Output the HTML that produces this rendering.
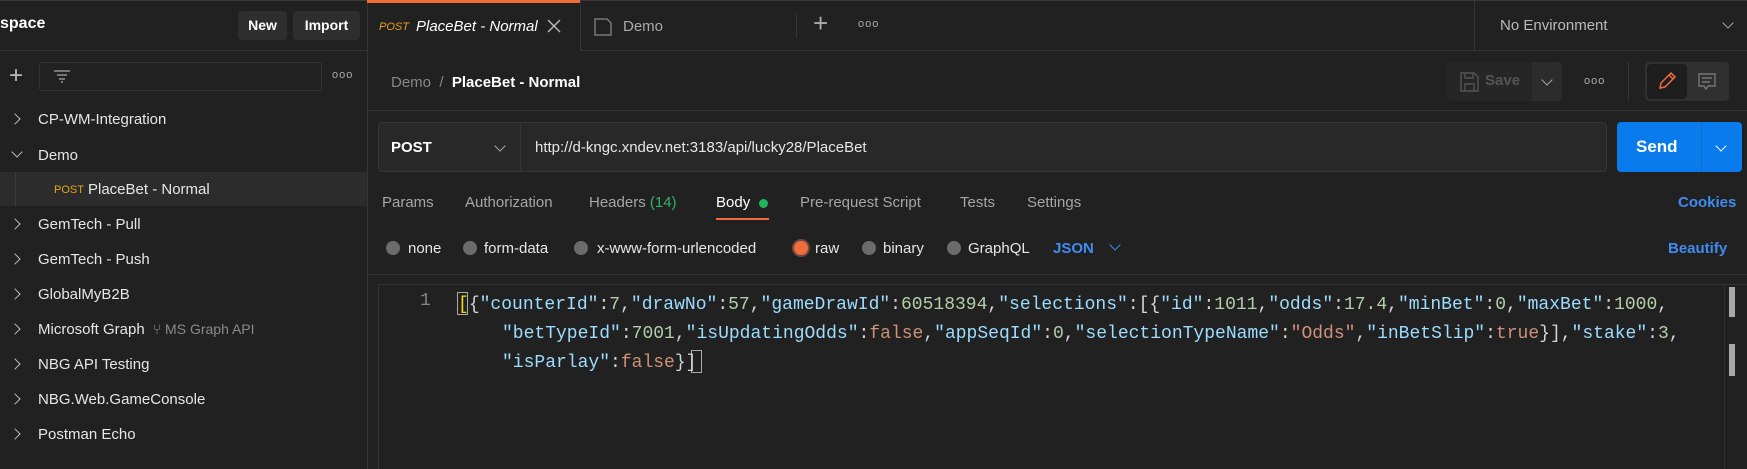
<!DOCTYPE html>
<html><head><meta charset="utf-8"><style>
*{margin:0;padding:0;box-sizing:border-box}
body{width:1747px;height:469px;background:#212121;font-family:"Liberation Sans",sans-serif;color:#e6e6e6;position:relative;overflow:hidden;font-size:15px}
.a{position:absolute;white-space:nowrap}
.hl{position:absolute;height:1px;background:#353535}
.vl{position:absolute;width:1px;background:#353535}
.chev{position:absolute;width:8px;height:8px;border-right:1.5px solid #bbb;border-bottom:1.5px solid #bbb}
.r{transform:rotate(-45deg)}
.d{transform:rotate(45deg)}
.radio{position:absolute;width:14px;height:14px;border-radius:50%;background:#6b6b6b}
.code{font-family:"Liberation Mono",monospace;font-size:18px;color:#d4d4d4}
.k{color:#9cdcfe}.n{color:#b5cea8}.s{color:#ce9178}
.dots{position:absolute;font-size:11px;color:#aaa;letter-spacing:1px}
</style></head><body>
<div class="hl" style="left:0;top:0;width:1747px;background:#3a3a3a"></div>
<!-- sidebar -->
<div class="a" style="left:0;top:15px;font-weight:bold;font-size:16px;color:#fff">space</div>
<div class="a" style="left:238px;top:11px;width:49px;height:29px;background:#2e2e2e;border-radius:4px;color:#fff;font-weight:bold;font-size:14px;text-align:center;line-height:29px">New</div>
<div class="a" style="left:293px;top:11px;width:67px;height:29px;background:#2e2e2e;border-radius:4px;color:#fff;font-weight:bold;font-size:14px;text-align:center;line-height:29px">Import</div>
<div class="hl" style="left:0;top:50px;width:367px"></div>
<div class="a" style="left:9px;top:62px;font-size:24px;color:#bbb;font-weight:300">+</div>
<div class="a" style="left:39px;top:62px;width:283px;height:29px;border:1px solid #333;border-radius:3px"></div>
<svg class="a" style="left:52px;top:68px" width="20" height="16"><path d="M2 3h16M5 7h10M7 11h6M9 14h2" stroke="#aaa" stroke-width="1.3"/></svg>
<div class="dots" style="left:332px;top:69px">ooo</div>
<div class="a" style="left:0;top:172px;width:367px;height:34px;background:#2c2c2c"></div>
<div class="vl" style="left:15px;top:172px;height:34px;background:#3a3a3a"></div>
<div class="chev r" style="left:11px;top:115px"></div>
<div class="a" style="left:38px;top:111px">CP-WM-Integration</div>
<div class="chev d" style="left:13px;top:148px"></div>
<div class="a" style="left:38px;top:147px">Demo</div>
<div class="a" style="left:54px;top:184px;font-size:11px;color:#e8a317">POST</div>
<div class="a" style="left:88px;top:181px">PlaceBet - Normal</div>
<div class="chev r" style="left:11px;top:220px"></div><div class="a" style="left:38px;top:216px">GemTech - Pull</div>
<div class="chev r" style="left:11px;top:255px"></div><div class="a" style="left:38px;top:251px">GemTech - Push</div>
<div class="chev r" style="left:11px;top:290px"></div><div class="a" style="left:38px;top:286px">GlobalMyB2B</div>
<div class="chev r" style="left:11px;top:325px"></div><div class="a" style="left:38px;top:321px">Microsoft Graph <span style="color:#8a8a8a;font-size:14px">&nbsp;⑂ MS Graph API</span></div>
<div class="chev r" style="left:11px;top:360px"></div><div class="a" style="left:38px;top:356px">NBG API Testing</div>
<div class="chev r" style="left:11px;top:395px"></div><div class="a" style="left:38px;top:391px">NBG.Web.GameConsole</div>
<div class="chev r" style="left:11px;top:430px"></div><div class="a" style="left:38px;top:426px">Postman Echo</div>
<div class="vl" style="left:367px;top:0;height:469px"></div>
<!-- tabs -->
<div class="a" style="left:367px;top:0;width:213px;height:3px;background:#f26b3a"></div>
<div class="a" style="left:379px;top:21px;font-size:11px;color:#e8a317;font-style:italic">POST</div>
<div class="a" style="left:416px;top:18px;font-style:italic;color:#fff;font-size:15px">PlaceBet - Normal</div>
<svg class="a" style="left:547px;top:19px" width="14" height="14"><path d="M1 1L13 13M13 1L1 13" stroke="#bbb" stroke-width="1.4"/></svg>
<div class="vl" style="left:580px;top:0;height:50px"></div>
<div class="hl" style="left:580px;top:50px;width:1167px"></div>
<svg class="a" style="left:593px;top:17px" width="20" height="20"><path d="M2 2h12l4 4v12H2z" fill="none" stroke="#777" stroke-width="1.5"/></svg>
<div class="a" style="left:623px;top:18px;color:#aaa">Demo</div>
<div class="vl" style="left:796px;top:13px;height:25px"></div>
<div class="a" style="left:813px;top:8px;font-size:26px;color:#aaa;font-weight:300">+</div>
<div class="dots" style="left:858px;top:18px">ooo</div>
<div class="vl" style="left:1474px;top:0;height:50px"></div>
<div class="a" style="left:1500px;top:17px;color:#bbb">No Environment</div>
<div class="chev d" style="left:1724px;top:19px;border-color:#aaa"></div>
<!-- breadcrumb -->
<div class="a" style="left:391px;top:74px;color:#888;font-size:15px">Demo&nbsp;&nbsp;/&nbsp;&nbsp;<span style="color:#fff;font-weight:bold">PlaceBet - Normal</span></div>
<div class="a" style="left:1447px;top:62px;width:115px;height:39px;background:#262626;border-radius:4px"></div>
<div class="a" style="left:1532px;top:62px;width:30px;height:39px;background:#2c2c2c;border-radius:0 4px 4px 0"></div>
<svg class="a" style="left:1460px;top:72px" width="19" height="20"><path d="M1 1h13l4 4v14H1z M5 1v5h8V1 M5 19v-7h9v7" fill="none" stroke="#555" stroke-width="1.4"/></svg>
<div class="a" style="left:1485px;top:72px;color:#555;font-weight:bold">Save</div>
<div class="chev d" style="left:1543px;top:76px;border-color:#aaa"></div>
<div class="dots" style="left:1584px;top:75px">ooo</div>
<div class="vl" style="left:1628px;top:62px;height:39px"></div>
<div class="a" style="left:1645px;top:62px;width:84px;height:39px;background:#303030;border-radius:4px"></div>
<div class="a" style="left:1647px;top:64px;width:40px;height:35px;background:#1e1e1e;border-radius:4px"></div>
<svg class="a" style="left:1657px;top:71px" width="20" height="20"><path d="M3 17l1-5L14 2l4 4L8 16z M12 4l4 4" fill="none" stroke="#f26b3a" stroke-width="1.5"/></svg>
<svg class="a" style="left:1697px;top:72px" width="20" height="20"><path d="M2 2h16v12h-7l-2 3-2-3H2z M5 6h10M5 10h8" fill="none" stroke="#777" stroke-width="1.4"/></svg>
<div class="hl" style="left:367px;top:110px;width:1380px"></div>
<!-- url -->
<div class="a" style="left:378px;top:122px;width:1229px;height:50px;background:#282828;border:1px solid #363636;border-radius:4px"></div>
<div class="vl" style="left:520px;top:122px;height:50px"></div>
<div class="a" style="left:391px;top:139px;color:#fff;font-weight:bold;font-size:15px">POST</div>
<div class="chev d" style="left:496px;top:142px;border-color:#aaa"></div>
<div class="a" style="left:535px;top:139px;color:#e6e6e6;font-size:15px">http://d-kngc.xndev.net:3183/api/lucky28/PlaceBet</div>
<div class="a" style="left:1617px;top:122px;width:125px;height:50px;background:#097bed;border-radius:4px"></div>
<div class="vl" style="left:1701px;top:122px;height:50px;background:#1a6bc2"></div>
<div class="a" style="left:1636px;top:137px;color:#fff;font-weight:bold;font-size:17px">Send</div>
<div class="chev d" style="left:1717px;top:142px;border-color:#fff"></div>
<!-- tabs row -->
<div class="a" style="left:382px;top:194px;color:#a6a6a6">Params</div>
<div class="a" style="left:465px;top:194px;color:#a6a6a6">Authorization</div>
<div class="a" style="left:589px;top:194px;color:#a6a6a6">Headers <span style="color:#2fb36a">(14)</span></div>
<div class="a" style="left:716px;top:194px;color:#fff">Body</div>
<div class="a" style="left:759px;top:199px;width:9px;height:9px;border-radius:50%;background:#1fb55b"></div>
<div class="a" style="left:716px;top:218px;width:53px;height:2px;background:#f26b3a"></div>
<div class="a" style="left:800px;top:194px;color:#a6a6a6">Pre-request Script</div>
<div class="a" style="left:960px;top:194px;color:#a6a6a6">Tests</div>
<div class="a" style="left:1027px;top:194px;color:#a6a6a6">Settings</div>
<div class="a" style="left:1678px;top:194px;color:#3f8cf0;font-weight:bold">Cookies</div>
<!-- body types -->
<div class="radio" style="left:386px;top:241px"></div><div class="a" style="left:408px;top:240px">none</div>
<div class="radio" style="left:463px;top:241px"></div><div class="a" style="left:484px;top:240px">form-data</div>
<div class="radio" style="left:574px;top:241px"></div><div class="a" style="left:597px;top:240px">x-www-form-urlencoded</div>
<div class="radio" style="left:794px;top:241px;background:#f26b3a;box-shadow:0 0 0 2px #6b4a3c"></div><div class="a" style="left:815px;top:240px">raw</div>
<div class="radio" style="left:862px;top:241px"></div><div class="a" style="left:883px;top:240px">binary</div>
<div class="radio" style="left:947px;top:241px"></div><div class="a" style="left:968px;top:240px">GraphQL</div>
<div class="a" style="left:1053px;top:240px;color:#3f8cf0;font-weight:bold">JSON</div>
<div class="chev d" style="left:1111px;top:241px;border-color:#3f8cf0"></div>
<div class="a" style="left:1668px;top:240px;color:#3f8cf0;font-weight:bold">Beautify</div>
<div class="hl" style="left:367px;top:274px;width:1380px"></div>
<!-- editor -->
<div class="a" style="left:378px;top:284px;width:1369px;height:185px;border-left:1px solid #333;border-top:1px solid #333"></div>
<div class="a code" style="left:420px;top:291px;color:#858585">1</div>
<div class="a" style="left:457px;top:292px;width:11px;height:23px;border:1px solid #aaa"></div>
<div class="a" style="left:691px;top:350px;width:11px;height:23px;border:1px solid #aaa"></div>
<div class="a code" style="left:458px;top:291px;line-height:29px"><span style="color:#ffd700">[</span>{<span class="k">"counterId"</span>:<span class="n">7</span>,<span class="k">"drawNo"</span>:<span class="n">57</span>,<span class="k">"gameDrawId"</span>:<span class="n">60518394</span>,<span class="k">"selections"</span>:[{<span class="k">"id"</span>:<span class="n">1011</span>,<span class="k">"odds"</span>:<span class="n">17.4</span>,<span class="k">"minBet"</span>:<span class="n">0</span>,<span class="k">"maxBet"</span>:<span class="n">1000</span>,</div>
<div class="a code" style="left:502px;top:320px;line-height:29px"><span class="k">"betTypeId"</span>:<span class="n">7001</span>,<span class="k">"isUpdatingOdds"</span>:<span class="s">false</span>,<span class="k">"appSeqId"</span>:<span class="n">0</span>,<span class="k">"selectionTypeName"</span>:<span class="s">"Odds"</span>,<span class="k">"inBetSlip"</span>:<span class="s">true</span>}],<span class="k">"stake"</span>:<span class="n">3</span>,</div>
<div class="a code" style="left:502px;top:349px;line-height:29px"><span class="k">"isParlay"</span>:<span class="s">false</span>}]</div>
<div class="vl" style="left:1724px;top:285px;height:184px;background:#2e2e2e"></div>
<div class="a" style="left:1729px;top:287px;width:6px;height:30px;background:#a8a8a8"></div>
<div class="a" style="left:1729px;top:344px;width:6px;height:32px;background:#a8a8a8"></div>
</body></html>
